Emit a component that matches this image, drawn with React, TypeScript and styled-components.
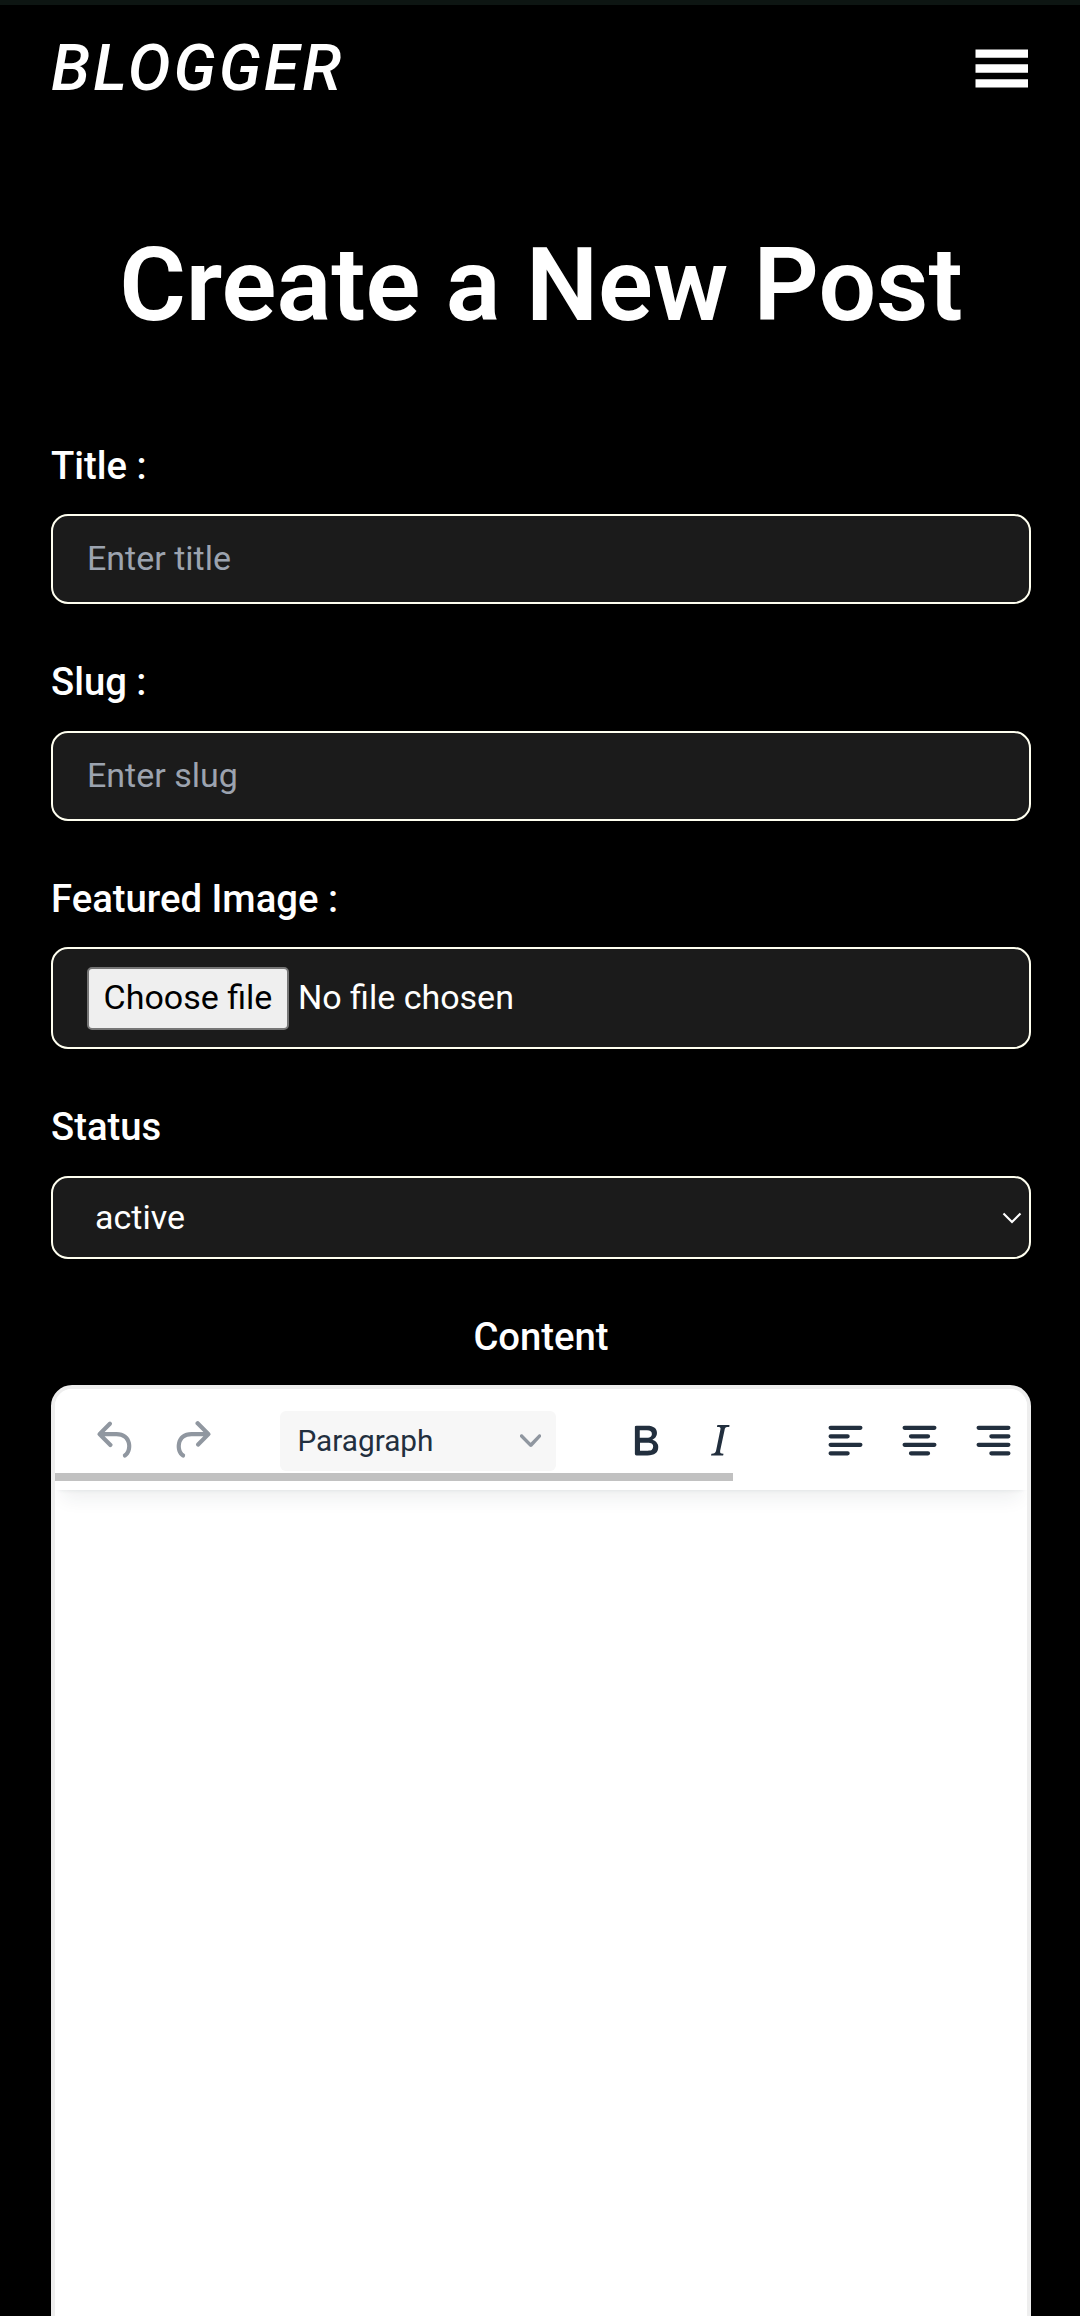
import React from "react";
import styled, { createGlobalStyle } from "styled-components";

const GlobalStyle = createGlobalStyle`
  *, *::before, *::after { box-sizing: border-box; }
  body {
    margin: 0;
    background: #000;
    color: #fff;
    font-family: Roboto, "Liberation Sans", sans-serif;
    overflow: hidden;
  }
`;

const Page = styled.div`
  height: 2316px;
  display: flex;
  flex-direction: column;
  background: #000;
  border-top: 5px solid #0d1512;
  overflow: hidden;
`;

const Header = styled.header`
  flex: none;
  height: 128px;
  padding: 0 51px;
  display: flex;
  align-items: center;
  justify-content: space-between;
`;

const Logo = styled.span`
  padding-bottom: 1px;
  font-size: 64px;
  line-height: 76px;
  font-style: italic;
  font-weight: 500;
  letter-spacing: 3px;
`;

const MenuButton = styled.button`
  width: 54px;
  height: 40px;
  padding: 0;
  border: 0;
  background: none;
  display: flex;
`;

const Heading = styled.h1`
  flex: none;
  margin: 92px 0 0;
  padding-left: 2px;
  font-size: 102px;
  line-height: 120px;
  font-weight: 600;
  text-align: center;
`;

const Form = styled.form`
  flex: 1;
  min-height: 0;
  margin-top: 93px;
  padding: 0 49px 0 51px;
  display: flex;
  flex-direction: column;
`;

const Field = styled.div<{ $gap: number }>`
  flex: none;
  display: flex;
  flex-direction: column;
  gap: ${(p) => p.$gap}px;
  margin-bottom: 50px;
`;

const Label = styled.label<{ $center?: boolean }>`
  font-size: 38.25px;
  line-height: 57px;
  font-weight: 500;
  text-align: ${(p) => (p.$center ? "center" : "left")};
`;

const TextInput = styled.input`
  height: 90px;
  width: 100%;
  padding: 0 34px 2px;
  border: 2px solid #fffff0;
  border-radius: 17px;
  background: #1b1b1b;
  color: #fff;
  font-family: inherit;
  font-size: 34px;
  outline: none;
  &::placeholder { color: #9ca3af; opacity: 1; }
`;

const ControlBox = styled.div<{ $height: number }>`
  height: ${(p) => p.$height}px;
  padding: 0 7px 0 34px;
  border: 2px solid #fffff0;
  border-radius: 17px;
  background: #1b1b1b;
  font-size: 34px;
  line-height: 50px;
  display: flex;
  align-items: center;
`;

const FileButton = styled.button`
  width: 202px;
  height: 63px;
  padding: 0 0 2px;
  margin-right: 9px;
  border: 2px solid #767676;
  border-radius: 5px;
  background: #efefef;
  color: #000;
  font: inherit;
`;

const FileName = styled.span`
  padding-bottom: 2px;
`;

const SelectValue = styled.span`
  flex: 1;
  padding: 0 0 2px 8px;
`;

const Editor = styled.div`
  flex: none;
  height: 1063px;
  margin-top: 19px;
  border: 4px solid #eee;
  border-radius: 21px;
  background: #fff;
  overflow: hidden;
  color: #222f3e;
`;

const EditorHeader = styled.div`
  height: 101px;
  display: flex;
  flex-direction: column;
  background: #fff;
  box-shadow: 0 4px 4px -4px rgba(34, 47, 62, 0.1), 0 17px 17px -8px rgba(34, 47, 62, 0.07);
`;

const Toolbar = styled.div`
  height: 84px;
  padding-top: 19px;
  padding-left: 25px;
  display: flex;
  align-items: center;
`;

const Group = styled.div<{ $after: number; $gap?: number }>`
  flex: none;
  display: flex;
  gap: ${(p) => p.$gap ?? 2}px;
  margin-right: ${(p) => p.$after}px;
`;

const ToolButton = styled.button<{ $off?: boolean }>`
  width: 72px;
  height: 60px;
  padding: 0;
  border: 0;
  background: none;
  color: ${(p) => (p.$off ? "#9097a0" : "#222f3e")};
  display: flex;
  align-items: center;
  justify-content: center;
`;

const BlockSelect = styled.div`
  flex: none;
  width: 276.5px;
  height: 60px;
  margin-right: 53.5px;
  padding: 0 15px 0 18px;
  border-radius: 6px;
  background: #f7f7f7;
  font-size: 29.75px;
  display: flex;
  align-items: center;
  justify-content: space-between;
`;

const ScrollThumb = styled.div`
  width: 678px;
  height: 8px;
  background: #c1c1c1;
`;

const ICONS = {
  undo: "M6.4 8H12c3.7 0 6.2 2 6.8 5.1.6 2.7-.4 5.6-2.3 6.8a1 1 0 0 1-1-1.8c1.1-.6 1.8-2.7 1.4-4.6-.5-2.1-2.1-3.5-4.9-3.5H6.4l3.3 3.3a1 1 0 1 1-1.4 1.4l-5-5a1 1 0 0 1 0-1.4l5-5a1 1 0 0 1 1.4 1.4L6.4 8Z",
  redo: "M17.6 10H12c-2.8 0-4.4 1.4-4.9 3.5-.4 2 .3 4 1.4 4.6a1 1 0 1 1-1 1.8c-2-1.2-2.9-4.1-2.3-6.8.6-3 3-5.1 6.8-5.1h5.6l-3.3-3.3a1 1 0 1 1 1.4-1.4l5 5a1 1 0 0 1 0 1.4l-5 5a1 1 0 0 1-1.4-1.4l3.3-3.3Z",
  bold: "M7.8 19c-.3 0-.5 0-.6-.2l-.2-.5V5.7c0-.2 0-.4.2-.5l.6-.2h5c1.5 0 2.7.3 3.5 1 .7.6 1.1 1.4 1.1 2.5a3 3 0 0 1-.6 1.9c-.4.6-1 1-1.6 1.2.4.1.9.3 1.3.6s.8.7 1 1.2c.4.4.5 1 .5 1.6 0 1.3-.4 2.3-1.3 3-.8.7-2.1 1-3.8 1H7.8Zm5-8.3c.6 0 1.2-.1 1.6-.5.4-.3.6-.7.6-1.3 0-1.1-.8-1.7-2.3-1.7H9.3v3.5h3.4Zm.5 6c.7 0 1.3-.1 1.7-.4.4-.4.6-.9.6-1.5s-.2-1-.7-1.4c-.4-.3-1-.4-2-.4H9.4v3.8h4Z",
  italic: "m16.7 4.7-.1.9h-.3c-.6 0-1 0-1.4.3-.3.3-.4.6-.5 1.1l-2.1 9.8v.6c0 .5.4.8 1.4.8h.2l-.2.8H8l.2-.8h.2c1.1 0 1.8-.5 2-1.5l2-9.8.1-.5c0-.6-.4-.8-1.4-.8h-.3l.2-.9h5.8Z",
  left: "M5 5h14a1 1 0 0 1 0 2H5a1 1 0 1 1 0-2Zm0 4h8a1 1 0 0 1 0 2H5a1 1 0 1 1 0-2Zm0 8h8a1 1 0 0 1 0 2H5a1 1 0 0 1 0-2Zm0-4h14a1 1 0 0 1 0 2H5a1 1 0 0 1 0-2Z",
  center: "M5 5h14a1 1 0 0 1 0 2H5a1 1 0 1 1 0-2Zm3 4h8a1 1 0 0 1 0 2H8a1 1 0 1 1 0-2Zm0 8h8a1 1 0 0 1 0 2H8a1 1 0 0 1 0-2Zm-3-4h14a1 1 0 0 1 0 2H5a1 1 0 0 1 0-2Z",
  right: "M5 5h14a1 1 0 0 1 0 2H5a1 1 0 1 1 0-2Zm6 4h8a1 1 0 0 1 0 2h-8a1 1 0 0 1 0-2Zm0 8h8a1 1 0 0 1 0 2h-8a1 1 0 0 1 0-2Zm-6-4h14a1 1 0 0 1 0 2H5a1 1 0 0 1 0-2Z",
};

function Tool({ name, off }: { name: keyof typeof ICONS; off?: boolean }) {
  return (
    <ToolButton type="button" aria-label={name} $off={off}>
      <svg width="51" height="51" viewBox="0 0 24 24" fill="currentColor">
        <path fillRule="evenodd" d={ICONS[name]} />
      </svg>
    </ToolButton>
  );
}

export default function App() {
  return (
    <>
      <GlobalStyle />
      <Page>
        <Header>
          <Logo>BLOGGER</Logo>
          <MenuButton aria-label="Menu">
            <svg width="54" height="40" viewBox="0 0 54 40" fill="#fff">
              <path d="M.5.4H53v8.400H.5zM.5 15.300H53v8.400H.5zM.5 30.200H53v8.400H.5z" />
            </svg>
          </MenuButton>
        </Header>
        <Heading>Create a New Post</Heading>
        <Form>
          <Field $gap={19}>
            <Label htmlFor="title">Title :</Label>
            <TextInput id="title" placeholder="Enter title" />
          </Field>
          <Field $gap={20}>
            <Label htmlFor="slug">Slug :</Label>
            <TextInput id="slug" placeholder="Enter slug" />
          </Field>
          <Field $gap={19}>
            <Label>Featured Image :</Label>
            <ControlBox $height={102}>
              <FileButton type="button">Choose file</FileButton>
              <FileName>No file chosen</FileName>
            </ControlBox>
          </Field>
          <Field $gap={20}>
            <Label>Status</Label>
            <ControlBox $height={83}>
              <SelectValue>active</SelectValue>
              <svg width="20" height="12" viewBox="0 0 20 12" fill="none" stroke="#fff" strokeWidth="2.1">
                <path d="M1.5 1.5 10 10l8.500-8.500" />
              </svg>
            </ControlBox>
          </Field>
          <Label $center>Content</Label>
          <Editor>
            <EditorHeader>
              <Toolbar>
                <Group $after={52.5} $gap={3}>
                  <Tool name="undo" off />
                  <Tool name="redo" off />
                </Group>
                <BlockSelect>
                  <span>Paragraph</span>
                  <svg width="21.25" height="21.25" viewBox="0 0 10 10" fill="#9097a0">
                    <path d="M8.7 2.2c.3-.3.8-.3 1 0 .4.4.4.9 0 1.2L5.7 7.8c-.3.3-.9.3-1.2 0L.2 3.4a.8.8 0 0 1 0-1.2c.3-.3.8-.3 1.1 0L5 6l3.7-3.8Z" />
                  </svg>
                </BlockSelect>
                <Group $after={54}>
                  <Tool name="bold" />
                  <Tool name="italic" />
                </Group>
                <Group $after={0}>
                  <Tool name="left" />
                  <Tool name="center" />
                  <Tool name="right" />
                </Group>
              </Toolbar>
              <ScrollThumb />
            </EditorHeader>
          </Editor>
        </Form>
      </Page>
    </>
  );
}
